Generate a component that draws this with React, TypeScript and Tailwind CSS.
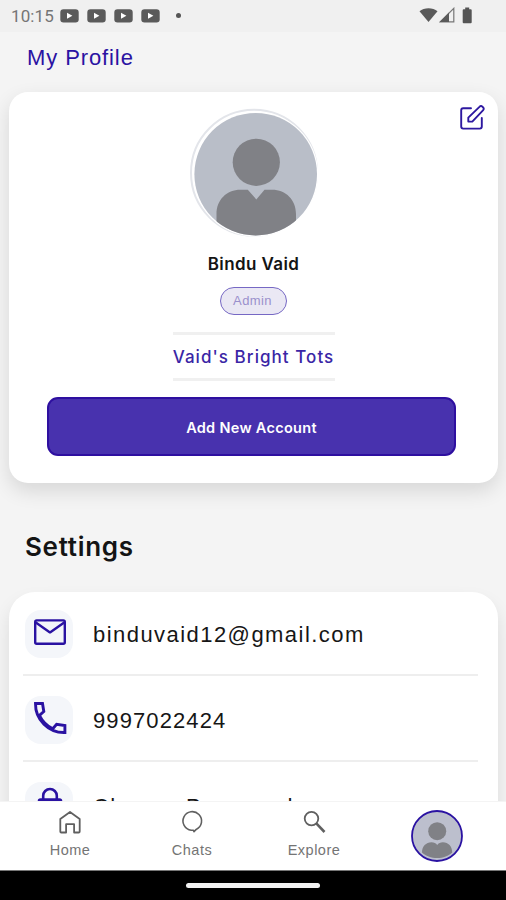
import type { ReactNode } from 'react';
import clsx from 'clsx';

function VideoBadge() {
  return (
    <svg width="19" height="14" viewBox="0 0 19 14">
      <rect x="0.3" y="0.3" width="18.4" height="13.2" rx="3.2" fill="#5a5a5a" />
      <path d="M7 3.8v6l5.4-3z" fill="#fff" />
    </svg>
  );
}

function StatusBar() {
  return (
    <div className="flex h-8 shrink-0 items-center bg-[#f0f0f0] pl-[11px] pr-[33px] font-['Roboto',sans-serif]">
      <span className="w-[49px] text-[17px] leading-none tracking-[0.1px] text-[#757575]">10:15</span>
      <div className="-mt-px flex gap-2">
        {[0, 1, 2, 3].map((n) => (
          <VideoBadge key={n} />
        ))}
      </div>
      <span className="-mt-[2px] ml-[16px] h-[5px] w-[5px] rounded-full bg-[#555]" />
      <div className="-mt-[2px] ml-auto flex items-center">
        <svg width="20" height="16" viewBox="0 0 20 16">
          <path d="M0.5 4.2C5 .1 14 .1 18.5 4.2L9.5 15z" fill="#5a5a5a" />
        </svg>
        <svg width="17" height="16" viewBox="0 0 17 16">
          <path d="M1.3 14.8L14.8 1.3v13.5z" fill="none" stroke="#777" strokeWidth="1.2" />
          <path d="M0.5 15L10 5.5V15z" fill="#5a5a5a" />
        </svg>
        <svg className="ml-[6px]" width="11" height="17" viewBox="0 0 11 17">
          <path d="M3.2 0.5h4v1.8h1.5a1 1 0 0 1 1 1v12a1 1 0 0 1-1 1h-7a1 1 0 0 1-1-1v-12a1 1 0 0 1 1-1h1.5z" fill="#555" />
        </svg>
      </div>
    </div>
  );
}

function EditIcon() {
  return (
    <svg width="27" height="27" viewBox="0 0 27 27" fill="none" stroke="#2d18a0" strokeWidth="1.9" strokeLinecap="round" strokeLinejoin="round">
      <path d="M12 4.2H4.2a2 2 0 0 0-2 2v16.4a2 2 0 0 0 2 2h16.6a2 2 0 0 0 2-2V14" />
      <path d="M9.3 17.6v-4L20.7 2.6a1.8 1.8 0 0 1 2.6 0l.9.9a1.8 1.8 0 0 1 0 2.6L13.3 17.6z" />
    </svg>
  );
}

function ProfileAvatar() {
  return (
    <svg width="130" height="130" viewBox="189 108 130 130">
      <defs>
        <clipPath id="avatar">
          <circle cx="255.7" cy="174.2" r="61.3" />
        </clipPath>
      </defs>
      <circle cx="254" cy="172.8" r="63" fill="#fff" stroke="#e3e5ea" strokeWidth="2" />
      <circle cx="255.7" cy="174.2" r="62.5" fill="#fff" />
      <g clipPath="url(#avatar)">
        <rect x="189" y="108" width="130" height="130" fill="#b9bec8" />
        <circle cx="256.3" cy="162.3" r="23.6" fill="#808186" />
        <path d="M216.5 238v-24c0-14 10-24.3 24-24.3h7.3l8.5 9.7 8.2-9.7h7.5c14 0 24 10.3 24 24.3v24z" fill="#808186" />
      </g>
    </svg>
  );
}

function NavAvatar() {
  return (
    <svg width="54" height="54" viewBox="0 0 54 54">
      <defs>
        <clipPath id="nav-avatar">
          <circle cx="27" cy="27" r="24" />
        </clipPath>
      </defs>
      <circle cx="27" cy="27" r="25" fill="#bcbfcd" stroke="#2a12a2" strokeWidth="1.8" />
      <g clipPath="url(#nav-avatar)" fill="#808186">
        <circle cx="27.2" cy="22.2" r="9" />
        <path d="M12 43.5c0-6 4-10.2 9.5-10.2 2.5 0 4.5 1 5.7 2.8 1.2-1.8 3.2-2.8 5.7-2.8 5.5 0 9.3 4.2 9.3 10.2-3.5 3.5-9 5.5-15 5.5s-11.7-2-15.2-5.5z" />
      </g>
    </svg>
  );
}

function MailIcon() {
  return (
    <svg className="-mt-[4px] ml-px" width="34" height="28" viewBox="0 0 34 28" fill="none" stroke="#2a12a2" strokeWidth="2.4" strokeLinejoin="round">
      <rect x="2.2" y="2.4" width="29.6" height="23.4" rx="1.5" />
      <path d="M2.8 4.5L17 14.4 31.2 4.5" />
    </svg>
  );
}

function PhoneIcon() {
  return (
    <svg className="-mt-[4px] ml-px" width="34" height="34" viewBox="0 0 34 34" fill="none" stroke="#2a12a2" strokeWidth="2.9">
      <path d="M2.5 2.5h7l1.3 8-4.4 3.8C9.5 20.6 13.7 24.8 19.8 27.7l3.8-4.4 8.3 1.2v7C15.5 32 2.2 18.5 2.5 2.5z" />
    </svg>
  );
}

function LockIcon() {
  return (
    <svg className="-mt-[2px] ml-px" width="28" height="36" viewBox="0 0 28 36" fill="none" stroke="#2a12a2" strokeWidth="2.6">
      <path d="M7.2 12V8.8a6.8 6.8 0 0 1 13.6 0V12" />
      <rect x="3" y="12.6" width="22" height="20" rx="1.5" />
    </svg>
  );
}

function HomeIcon() {
  return (
    <svg width="24" height="24" viewBox="0 0 24 24" fill="none" stroke="#606060" strokeWidth="1.8" strokeLinejoin="round">
      <path d="M2.3 9L12 1.9 21.7 9v12.5a1 1 0 0 1-1 1h-4.6v-8.3H8.1v8.3H3.3a1 1 0 0 1-1-1z" />
    </svg>
  );
}

function ChatIcon() {
  return (
    <svg width="24" height="24" viewBox="0 0 24 24" fill="none" stroke="#606060" strokeWidth="1.6" strokeLinejoin="round">
      <path d="M11.2 20.2A9.3 9.3 0 1 1 16.2 19.4L14 21.6 13.3 20.2z" />
    </svg>
  );
}

function SearchIcon() {
  return (
    <svg width="24" height="24" viewBox="0 0 24 24" fill="none" stroke="#606060">
      <circle cx="9.5" cy="8.6" r="6.8" strokeWidth="1.8" />
      <path d="M14.3 13.4L22.5 22" strokeWidth="2.6" />
    </svg>
  );
}

interface SettingRowProps {
  icon: ReactNode;
  label: string;
  labelClass?: string;
  last?: boolean;
}

function SettingRow({ icon, label, labelClass, last }: SettingRowProps) {
  return (
    <div className={clsx('flex h-[86px] items-center border-b-2 pb-[16px] pl-[2px] pt-[20px]', last ? 'border-white' : 'border-[#eeeeee]')}>
      <div className="flex h-12 w-12 items-center justify-center rounded-[16px] bg-[#f4f6fa]">{icon}</div>
      <span className={clsx('ml-[20px] whitespace-nowrap pt-[2px] text-[22px] leading-[26px] text-[#161616]', labelClass)}>
        {label}
      </span>
    </div>
  );
}

interface NavItemProps {
  icon: ReactNode;
  label: string;
}

function NavItem({ icon, label }: NavItemProps) {
  return (
    <div className="flex w-[122px] flex-col items-center pt-[8px]">
      {icon}
      <span className="mt-[8px] text-[14.5px] leading-4 tracking-[0.5px] text-[#747474]">{label}</span>
    </div>
  );
}

export default function App() {
  return (
    <div className="flex h-[900px] w-[506px] flex-col overflow-hidden bg-[#f4f4f4] font-['Liberation_Sans',Arial,sans-serif]">
      <StatusBar />

      <main className="min-h-0 flex-1 overflow-hidden">
        <h1 className="h-[60px] pl-[27px] pt-[13px] text-[22px] leading-[26px] tracking-[0.9px] text-[#2a12a2]">My Profile</h1>

        <section className="relative ml-[9px] flex h-[391px] w-[489px] flex-col items-center rounded-[19px] bg-white pt-[16px] shadow-[0_8px_20px_rgba(0,0,0,0.12)]">
          <button className="absolute right-[12px] top-[12px]">
            <EditIcon />
          </button>
          <ProfileAvatar />
          <h2 className="mt-[15px] font-['Inter',sans-serif] text-[17px] font-semibold leading-[22px] tracking-[0.4px] text-[#141414]">
            Bindu Vaid
          </h2>
          <span className="mt-[12px] flex h-[28px] w-[67px] items-center justify-center rounded-full border-[1.5px] border-[#7668c4] bg-[#eae8f4] pr-[2px] text-[13px] tracking-[0.4px] text-[#9a90cc]">
            Admin
          </span>
          <div className="mt-[17px] flex h-[49px] w-[162px] items-center justify-center whitespace-nowrap border-b-[3px] border-t-[3px] border-[#f0f0f0] pt-[2px] font-['Inter',sans-serif] text-[17px] font-medium tracking-[1.05px] text-[#3a26a6]">
            Vaid's Bright Tots
          </div>
          <button className="mr-[4px] mt-[16px] h-[59px] w-[409px] rounded-[11px] border-2 border-[#2e0fa0] bg-[#4832ae] pt-[3px] font-['Inter',sans-serif] text-[14.5px] font-semibold tracking-[0.3px] text-white">
            Add New Account
          </button>
        </section>

        <h2 className="mt-[47px] pl-[25px] font-['Inter',sans-serif] text-[26px] font-semibold leading-[34px] tracking-[0.7px] text-[#141414]">
          Settings
        </h2>

        <section className="ml-[9px] mt-[28px] flex h-[360px] w-[489px] flex-col rounded-t-[26px] bg-white pl-[14px] pr-[20px] shadow-[0_10px_18px_rgba(0,0,0,0.1)]">
          <div className="-mt-[2px]">
            <SettingRow icon={<MailIcon />} label="binduvaid12@gmail.com" labelClass="tracking-[1.45px]" />
            <SettingRow icon={<PhoneIcon />} label="9997022424" labelClass="tracking-[1.1px]" />
            <SettingRow icon={<LockIcon />} label="Change Password" labelClass="tracking-[1.4px]" last />
          </div>
        </section>
      </main>

      <nav className="flex h-[69px] shrink-0 border-t border-[#f4f4f4] bg-white pl-[9px]">
        <NavItem icon={<HomeIcon />} label="Home" />
        <NavItem icon={<ChatIcon />} label="Chats" />
        <NavItem icon={<SearchIcon />} label="Explore" />
        <div className="flex w-[124px] justify-center pt-[7px]">
          <NavAvatar />
        </div>
      </nav>

      <div className="flex h-[30px] shrink-0 justify-center border-t border-[#777] bg-black pt-[12px]">
        <span className="h-[5px] w-[134px] rounded-full bg-[#f2f2f2]" />
      </div>
    </div>
  );
}
